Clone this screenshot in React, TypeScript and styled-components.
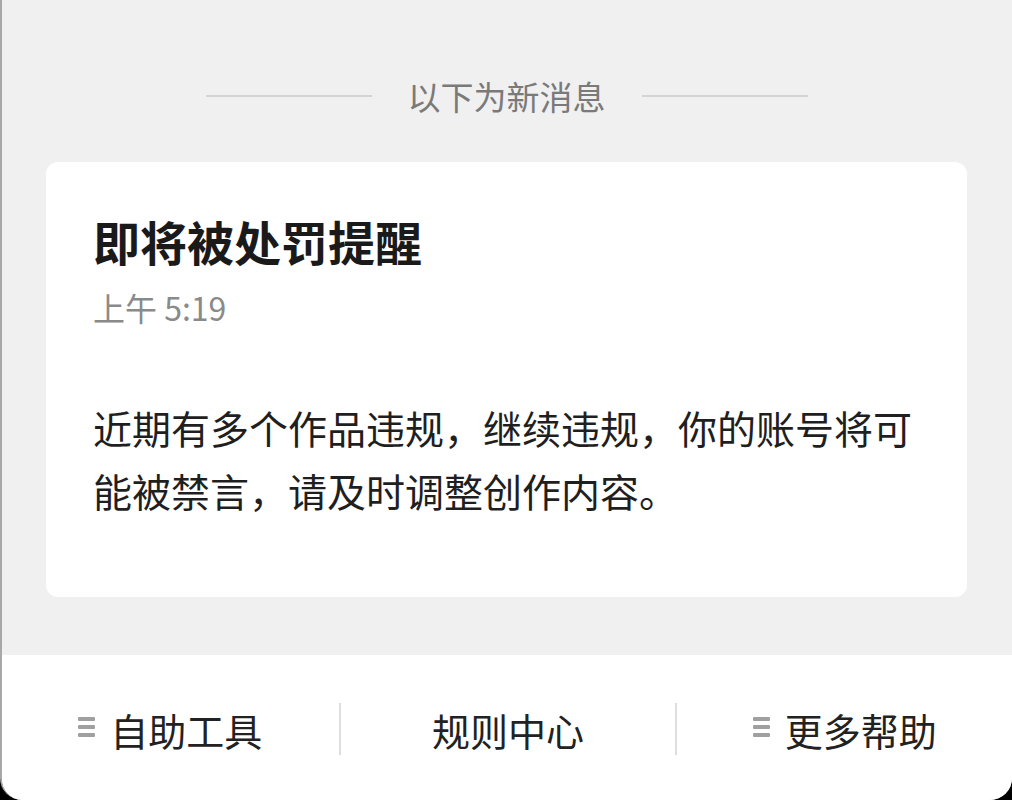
import styled, { createGlobalStyle } from "styled-components";

const GlobalStyle = createGlobalStyle`
  html, body {
    margin: 0;
    padding: 0;
    background: #000;
  }
  body {
    font-family: "Noto Sans CJK SC", "Noto Sans", sans-serif;
  }
`;

const Screen = styled.div`
  height: 100vh;
  display: flex;
  flex-direction: column;
  background-color: #f0f0f0;
  border-left: 2px solid #a8a8a8;
  border-bottom-left-radius: 22px;
  border-bottom-right-radius: 22px;
  overflow: hidden;
  box-sizing: border-box;
`;

const Feed = styled.div`
  flex: 1;
  display: flex;
  flex-direction: column;
  padding: 75px 45px 0 44px;
`;

const Divider = styled.div`
  display: flex;
  align-items: center;
  justify-content: center;
  gap: 36px;
  height: 42px;
  color: #7a7a7a;
  font-size: 33px;
  line-height: 42px;
  &::before,
  &::after {
    content: "";
    width: 166px;
    height: 2px;
    background-color: #d4d4d4;
  }
`;

const Card = styled.div`
  margin-top: 45px;
  background-color: #fff;
  border-radius: 12px;
  padding: 46px 47px 75px 47px;
`;

const Title = styled.h2`
  margin: 0;
  font-size: 47px;
  line-height: 66px;
  font-weight: 700;
  color: #1a1a1a;
`;

const Time = styled.div`
  margin-top: 11px;
  font-size: 32px;
  line-height: 45px;
  color: #8a8a8a;
`;

const Body = styled.p`
  margin: 66px 0 0;
  font-size: 39px;
  line-height: 63px;
  color: #1f1f1f;
`;

const BottomBar = styled.nav`
  height: 145px;
  flex-shrink: 0;
  background-color: #fff;
  display: grid;
  grid-template-columns: repeat(3, 1fr);
  align-items: start;
  padding-top: 48px;
  box-sizing: border-box;
`;

const BarItem = styled.div<{ $divider: boolean }>`
  height: 52px;
  display: flex;
  align-items: center;
  justify-content: center;
  gap: 15px;
  font-size: 38px;
  color: #222;
  border-left: ${(p) => (p.$divider ? "2px solid #dedede" : "none")};
`;

const MenuIcon = styled.span`
  display: flex;
  flex-direction: column;
  gap: 4px;
  width: 17px;
  margin-top: -4px;
  span {
    height: 4px;
    background-color: #a0a0a0;
    border-radius: 1px;
  }
`;

function Menu() {
  return (
    <MenuIcon>
      <span />
      <span />
      <span />
    </MenuIcon>
  );
}

export default function App() {
  return (
    <>
      <GlobalStyle />
      <Screen>
        <Feed>
          <Divider>以下为新消息</Divider>
          <Card>
            <Title>即将被处罚提醒</Title>
            <Time>上午 5:19</Time>
            <Body>
              近期有多个作品违规，继续违规，你的账号将可能被禁言，请及时调整创作内容。
            </Body>
          </Card>
        </Feed>
        <BottomBar>
          <BarItem $divider={false}>
            <Menu />
            自助工具
          </BarItem>
          <BarItem $divider={true}>规则中心</BarItem>
          <BarItem $divider={true}>
            <Menu />
            更多帮助
          </BarItem>
        </BottomBar>
      </Screen>
    </>
  );
}
